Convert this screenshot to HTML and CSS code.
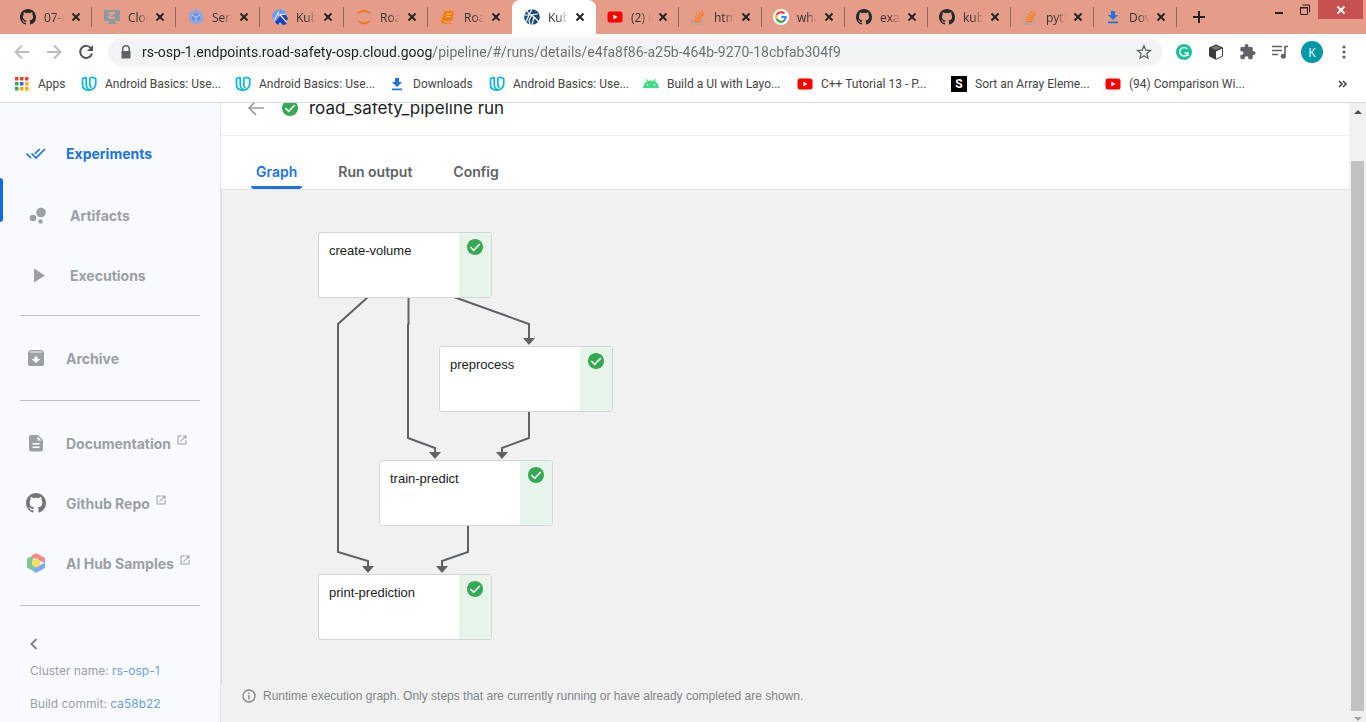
FILE: index.html
```html
<!DOCTYPE html>
<html lang="en">
<head>
<meta charset="utf-8">
<title>Kubeflow Pipelines</title>
<link rel="stylesheet" href="styles.css">
</head>
<body>
<svg class="defs" aria-hidden="true">
  <symbol id="github" viewBox="0 0 16 16"><path fill="currentColor" d="M8 0C3.58 0 0 3.58 0 8c0 3.54 2.29 6.53 5.47 7.59.4.07.55-.17.55-.38 0-.19-.01-.82-.01-1.49-2.01.37-2.53-.49-2.69-.94-.09-.23-.48-.94-.82-1.13-.28-.15-.68-.52-.01-.53.63-.01 1.08.58 1.23.82.72 1.21 1.87.87 2.33.66.07-.52.28-.87.51-1.07-1.78-.2-3.64-.89-3.64-3.95 0-.87.31-1.59.82-2.15-.08-.2-.36-1.02.08-2.12 0 0 .67-.21 2.2.82a7.6 7.6 0 0 1 4 0c1.53-1.04 2.2-.82 2.2-.82.44 1.1.16 1.92.08 2.12.51.56.82 1.27.82 2.15 0 3.07-1.87 3.75-3.65 3.95.29.25.54.73.54 1.48 0 1.07-.01 1.93-.01 2.2 0 .21.15.46.55.38A8 8 0 0 0 16 8c0-4.42-3.58-8-8-8z"/></symbol>
  <symbol id="x" viewBox="0 0 16 16"><path d="M4.500 4.500l7 7m0-7l-7 7" stroke="#222" stroke-width="1.900" fill="none"/></symbol>
  <symbol id="youtube" viewBox="0 0 16 16"><rect x="0.500" y="2.500" width="15" height="11" rx="2.500" fill="#f00"/><path d="M6.300 5.500v5l4.200-2.500z" fill="#fff"/></symbol>
  <symbol id="stack" viewBox="0 0 16 16"><path d="M2 10v5h10v-5" stroke="#a9a9a9" stroke-width="1.300" fill="none"/><path d="M3.700 12.700h6.600M3.900 10.300l6.500 1.100M4.700 7.600l6 2.400M6.300 4.800l5 4.100M8.600 2.400l3.900 5.200M11.600 1l1.500 6" stroke="#f48024" stroke-width="1.250" fill="none"/></symbol>
  <symbol id="download" viewBox="0 0 16 16"><path d="M6 2h4v4h3l-5 5-5-5h3zM3 12.500h10v1.700H3z" fill="#1a73e8"/></symbol>
  <symbol id="udacity" viewBox="0 0 16 16"><path d="M5.500 1.200L1.500 2.500V8c0 3.500 1.500 5.500 4.300 6 5.200.8 8.900-1.800 8.900-6V2.500l-3.500-1.300M5.200 1.500V8c0 2.800 1 4.800 3.300 5.800M11.200 1.200L8.800 2.300V9c0 1.300.6 2.400 1.800 2.900" fill="none" stroke="#02b3e4" stroke-width="1.700" stroke-linejoin="round"/></symbol>
  <symbol id="check" viewBox="0 0 24 24"><path fill="#34a853" d="M12 0C5.400 0 0 5.400 0 12s5.400 12 12 12 12-5.400 12-12S18.600 0 12 0z"/><path d="M5 12l5 5 9.300-9.500" fill="none" stroke="#fff" stroke-width="2.400"/></symbol>
  <symbol id="open" viewBox="0 0 24 24"><path fill="currentColor" d="M19 19H5V5h7V3H3v18h18v-9h-2v7zM14 3v2h3.600l-9.800 9.800 1.400 1.400L19 6.400V10h2V3z"/></symbol>
</svg>

<header class="browser">
  <div class="strip">
    <div class="tab"><svg class="fav ink"><use href="#github"/></svg><span class="tab-title">07-r</span><button class="close" aria-label="Close tab"><svg><use href="#x"/></svg></button></div>
    <div class="tab"><svg class="fav" viewBox="0 0 16 16"><path d="M0 1h16v11h-5v2h2v1H3v-1h2v-2H0z" fill="#93989b"/><path d="M4 4h5l2-1M4 8.500l6-4.500M5 9h6" stroke="#e3aa98" stroke-width="1.500" fill="none"/></svg><span class="tab-title">Clou</span><button class="close" aria-label="Close tab"><svg><use href="#x"/></svg></button></div>
    <div class="tab"><svg class="fav" viewBox="0 0 16 16"><path d="M8 0l7 4v8l-7 4-7-4V4z" fill="#a9a2c2"/><path d="M8 1.500l5.500 3v7L8 14.500l-5.500-3v-7z" fill="none" stroke="#7baaf7" stroke-width="1.200"/><path d="M8 4l4 2.200v4.200L8 12.500l-4-2.100V6.200z" fill="#5b8ff0"/><path d="M4 6.200l4 2 4-2M8 8.200v4" stroke="#c4cff0" stroke-width="1" fill="none"/></svg><span class="tab-title">Serv</span><button class="close" aria-label="Close tab"><svg><use href="#x"/></svg></button></div>
    <div class="tab"><svg class="fav" viewBox="0 0 16 16"><path d="M0 6l3-4 5-2 5 2 2 4-5-1-4 3-3 5-2-3z" fill="#699df5"/><path d="M3 13l5-6 7 8-4 1-3-3-2 3zM9 5l5 1 2 4-2 2z" fill="#0d47c9"/><path d="M7 2L2 12M5 6l9-1M8 6l7 7" stroke="#e8eefc" stroke-width="1" fill="none"/></svg><span class="tab-title">Kub</span><button class="close" aria-label="Close tab"><svg><use href="#x"/></svg></button></div>
    <div class="tab"><svg class="fav" viewBox="0 0 16 16"><path d="M1 5.500C3-1 13-1 15 5.500 12 2 4 2 1 5.500zM1 10.500c2 6.500 12 6.500 14 0-3 3.500-11 3.500-14 0z" fill="#f37726"/></svg><span class="tab-title">Roa</span><button class="close" aria-label="Close tab"><svg><use href="#x"/></svg></button></div>
    <div class="tab tab-before"><svg class="fav" viewBox="0 0 16 16"><path d="M4.500 2H14l-2 10H4.500c-1.500 0-1.500 1.500 0 1.500H12l-.500 1H3.500c-2 0-2.500-1-2-3z" fill="#f57c00"/><path d="M6.500 5h5M6 7.500h5" stroke="#ffd0a0" stroke-width="1"/></svg><span class="tab-title">Roa</span><button class="close" aria-label="Close tab"><svg><use href="#x"/></svg></button></div>
    <div class="tab tab-active"><svg class="fav" viewBox="0 0 16 16"><circle cx="8" cy="8" r="7.800" fill="#174a78"/><path d="M0 6l5 0L8 0M5 6l-3 7M5 6l9-1M8 6l-3 5 1 5M8 6l7 7M3 2l3 4M10 8l-2 8" stroke="#fff" stroke-width="1.200" fill="none"/></svg><span class="tab-title">Kub</span><button class="close" aria-label="Close tab"><svg><use href="#x"/></svg></button></div>
    <div class="tab tab-slim"><svg class="fav"><use href="#youtube"/></svg><span class="tab-title">(2) I</span><button class="close" aria-label="Close tab"><svg><use href="#x"/></svg></button></div>
    <div class="tab tab-slim"><svg class="fav"><use href="#stack"/></svg><span class="tab-title">htm</span><button class="close" aria-label="Close tab"><svg><use href="#x"/></svg></button></div>
    <div class="tab tab-slim"><svg class="fav" viewBox="0 0 16 16"><circle cx="8" cy="8" r="8" fill="#fff"/><g fill="none" stroke-width="2.200"><path d="M11.500 4.600A4.800 4.800 0 0 0 3.700 6" stroke="#ea4335"/><path d="M3.700 5.900a4.800 4.800 0 0 0 0 4.200" stroke="#fbbc05"/><path d="M3.700 10a4.800 4.800 0 0 0 7.600 1.500" stroke="#34a853"/><path d="M8.200 8h4.500c0 1.500-.500 2.700-1.500 3.600" stroke="#4285f4"/></g></svg><span class="tab-title">wha</span><button class="close" aria-label="Close tab"><svg><use href="#x"/></svg></button></div>
    <div class="tab tab-slim"><svg class="fav ink"><use href="#github"/></svg><span class="tab-title">exa</span><button class="close" aria-label="Close tab"><svg><use href="#x"/></svg></button></div>
    <div class="tab tab-slim"><svg class="fav ink"><use href="#github"/></svg><span class="tab-title">kub</span><button class="close" aria-label="Close tab"><svg><use href="#x"/></svg></button></div>
    <div class="tab tab-slim"><svg class="fav"><use href="#stack"/></svg><span class="tab-title">pytl</span><button class="close" aria-label="Close tab"><svg><use href="#x"/></svg></button></div>
    <div class="tab tab-slim"><svg class="fav"><use href="#download"/></svg><span class="tab-title">Dov</span><button class="close" aria-label="Close tab"><svg><use href="#x"/></svg></button></div>
    <button class="new-tab" aria-label="New tab"><svg viewBox="0 0 12 12"><path d="M6 0v12M0 6h12" stroke="#222" stroke-width="2"/></svg></button>
    <div class="window-controls">
      <button class="win" aria-label="Minimize"><svg viewBox="0 0 12 12"><path d="M2 9h8" stroke="#222" stroke-width="2"/></svg></button>
      <button class="win" aria-label="Restore"><svg viewBox="0 0 12 12"><path d="M1.500 4h7v6.500h-7zM1 3.500h8M3.500 1h7v7.500" stroke="#222" fill="none"/></svg></button>
      <button class="win win-close" aria-label="Close"><svg viewBox="0 0 12 12"><path d="M2.500 2.500l7 7m0-7l-7 7" stroke="#fff" stroke-width="1.800"/></svg></button>
    </div>
  </div>

  <div class="toolbar">
    <button class="tool" aria-label="Back"><svg viewBox="0 0 16 16"><path d="M15 8H2M8 1.500L1.500 8 8 14.500" stroke="#babcbe" stroke-width="1.800" fill="none"/></svg></button>
    <button class="tool" aria-label="Forward"><svg viewBox="0 0 16 16"><path d="M1 8h13M8 1.500L14.500 8 8 14.500" stroke="#babcbe" stroke-width="1.800" fill="none"/></svg></button>
    <button class="tool" aria-label="Reload"><svg viewBox="0 0 16 16"><path d="M13.200 4.500A6 6 0 1 0 14 9.500" stroke="#555" stroke-width="2" fill="none"/><path d="M15 1v6H9z" fill="#555"/></svg></button>
    <div class="omnibox">
      <svg class="lock" viewBox="0 0 12 14"><path d="M2 6V4a4 4 0 0 1 8 0v2h.500v7.500h-9V6zm1.500 0h5V4a2.500 2.500 0 0 0-5 0z" fill="#5f6368"/></svg>
      <input class="url" type="text" aria-label="Address" value="rs-osp-1.endpoints.road-safety-osp.cloud.goog/pipeline/#/runs/details/e4fa8f86-a25b-464b-9270-18cbfab304f9">
      <button class="star" aria-label="Bookmark this page"><svg viewBox="0 0 16 16"><path d="M8 1.800l1.800 4.300 4.700.4-3.600 3.100 1.100 4.600L8 11.700l-4 2.500 1.100-4.600-3.600-3.100 4.700-.4z" fill="none" stroke="#5f6368" stroke-width="1.300"/></svg></button>
    </div>
    <div class="extensions">
      <button class="tool" aria-label="Grammarly"><svg viewBox="0 0 16 16"><circle cx="8" cy="8" r="8" fill="#15c39a"/><path d="M11.300 5A4.300 4.300 0 1 0 12 9.500M8.500 9H12v3" stroke="#fff" stroke-width="1.500" fill="none"/></svg></button>
      <button class="tool" aria-label="Cube"><svg viewBox="0 0 16 16"><path d="M8 .5l7 3v8.700l-7 3.500-7-3.500V3.500z" fill="#3c3c3c"/><path d="M8 7.500l6-3v7.200l-6 3z" fill="#fff"/><path d="M3 3.800L8 1.700l5 2.100-5 2.300z" fill="#777"/></svg></button>
      <button class="tool" aria-label="Extensions"><svg viewBox="2 1 21 22"><path fill="#5f6368" d="M20.500 11H19V7a2 2 0 0 0-2-2h-4V3.500a2.500 2.500 0 0 0-5 0V5H4a2 2 0 0 0-2 2v3.800h1.500a2.700 2.700 0 0 1 0 5.400H2V20c0 1.100.9 2 2 2h3.800v-1.500a2.700 2.700 0 0 1 5.400 0V22H17a2 2 0 0 0 2-2v-4h1.500a2.500 2.500 0 0 0 0-5z"/></svg></button>
      <button class="tool" aria-label="Media"><svg viewBox="0 0 16 16"><path d="M0 2.500h10M0 6.500h10M0 10.500h6M16 2.500h-3v9.500" stroke="#5f6368" stroke-width="1.600" fill="none"/><circle cx="11.300" cy="12.300" r="2.500" fill="#5f6368"/></svg></button>
      <button class="avatar" aria-label="Profile">K</button>
      <button class="tool" aria-label="Menu"><svg viewBox="0 0 16 16"><g fill="#5f6368"><circle cx="8" cy="3" r="1.600"/><circle cx="8" cy="8" r="1.600"/><circle cx="8" cy="13" r="1.600"/></g></svg></button>
    </div>
  </div>

  <nav class="bookmarks" aria-label="Bookmarks">
    <a class="mark mark-apps" href="#apps"><svg class="fav" viewBox="0 0 16 16"><path d="M1 1h3.500v3.500H1zM6 1h3.500v3.500H6zM11 1h3.500v3.500H11z" fill="#ea4335"/><path d="M1 6h3.500v3.500H1zM1 11h3.500v3.500H1z" fill="#34a853"/><path d="M6 6h3.500v3.500H6z" fill="#1a73e8"/><path d="M11 6h3.500v3.500H11zM6 11h3.500v3.500H6zM11 11h3.500v3.500H11z" fill="#fbab05"/></svg>Apps</a>
    <a class="mark" href="#b1"><svg class="fav"><use href="#udacity"/></svg>Android Basics: Use...</a>
    <a class="mark" href="#b2"><svg class="fav"><use href="#udacity"/></svg>Android Basics: Use...</a>
    <a class="mark mark-short" href="#b3"><svg class="fav"><use href="#download"/></svg>Downloads</a>
    <a class="mark" href="#b4"><svg class="fav"><use href="#udacity"/></svg>Android Basics: Use...</a>
    <a class="mark" href="#b5"><svg class="fav" viewBox="0 0 16 16"><path d="M0 12c.300-3.500 2-5.500 4-6.500L2.800 3.400l.8-.4L5 5a9 9 0 0 1 6 0l1.400-2 .8.400L12 5.500c2 1 3.700 3 4 6.500z" fill="#3ddc84"/><circle cx="4.500" cy="9" r=".8" fill="#fff"/><circle cx="11.500" cy="9" r=".8" fill="#fff"/></svg>Build a UI with Layo...</a>
    <a class="mark" href="#b6"><svg class="fav"><use href="#youtube"/></svg>C++ Tutorial 13 - P...</a>
    <a class="mark" href="#b7"><span class="fav letter">S</span>Sort an Array Eleme...</a>
    <a class="mark" href="#b8"><svg class="fav"><use href="#youtube"/></svg>(94) Comparison Wi...</a>
    <button class="more" aria-label="More bookmarks"><svg viewBox="0 0 10 8"><path d="M1 1l3 3-3 3M5 1l3 3-3 3" stroke="#444" stroke-width="1.600" fill="none"/></svg></button>
  </nav>
</header>

<div class="page">
  <aside class="sidebar">
    <span class="indicator"></span>
    <nav>
      <a class="item item-active" href="#experiments"><svg viewBox="0 0 20 20"><path d="M0.500 10.500l4.500 4.500M5.500 10.500l4.500 4.500 9-9M8.700 11l5-5" stroke="#1a73e8" stroke-width="1.700" fill="none"/></svg>Experiments</a>
      <a class="item item-sub" href="#artifacts"><svg viewBox="0 0 20 20"><g fill="#9aa0a6"><circle cx="5" cy="12" r="3.300"/><circle cx="13" cy="6.500" r="4.800"/><circle cx="12.500" cy="15.500" r="2.200"/></g></svg>Artifacts</a>
      <a class="item item-sub" href="#executions"><svg viewBox="0 0 20 20"><path d="M6 2.500v14l11-7z" fill="#9aa0a6"/></svg>Executions</a>
      <hr>
      <a class="item" href="#archive"><svg viewBox="0 0 20 20"><path d="M4 2h12l2 2.500V16a2 2 0 0 1-2 2H4a2 2 0 0 1-2-2V4.500z" fill="#9aa0a6"/><path d="M8.500 8.500h3v2.500h3L10 15l-4.500-4h3z" fill="#fff"/><path d="M4 4h12" stroke="#f8fafd"/></svg>Archive</a>
      <hr>
      <a class="item" href="#docs"><svg viewBox="0 0 20 20"><path d="M5 2h7l5 5v9.500a2 2 0 0 1-2 2H5a2 2 0 0 1-2-2V4a2 2 0 0 1 2-2z" fill="#9aa0a6"/><path d="M11.500 3.500v4h4zM6.500 10h7v1.500h-7zM6.500 13.500h7V15h-7z" fill="#fff"/></svg>Documentation<svg class="ext"><use href="#open"/></svg></a>
      <a class="item" href="#github-repo"><svg class="octo"><use href="#github"/></svg>Github Repo<svg class="ext"><use href="#open"/></svg></a>
      <a class="item" href="#samples"><svg viewBox="0 0 20 20"><path d="M10 0l9 5v5l-5-2-4-3-4 1V2.500z" fill="#f08d87"/><path d="M6 3L1 5.500v9L7 18l3-3-3-4V6z" fill="#7fc796"/><path d="M19 9.500V15l-9 5-3-2v-2.500l8-4z" fill="#7baaf7"/><path d="M10 5.500l4 2.300v4.500l-4 2.200-4-2.200V7.800z" fill="#fbdc5c"/></svg>AI Hub Samples<svg class="ext"><use href="#open"/></svg></a>
      <hr>
    </nav>
    <div class="build">
      <button class="collapse" aria-label="Collapse"><svg viewBox="0 0 10 14"><path d="M7.500 2L2.500 7l5 5" stroke="#80868b" stroke-width="2" fill="none"/></svg></button>
      <p>Cluster name: <a href="#cluster">rs-osp-1</a></p>
      <p>Build commit: <a href="#commit">ca58b22</a></p>
    </div>
  </aside>

  <main class="main">
    <div class="heading">
      <button class="back" aria-label="Back to runs"><svg viewBox="0 0 16 16"><path d="M16 8H1.500M8 1L1 8l7 7" stroke="#9e9e9e" stroke-width="1.700" fill="none"/></svg></button>
      <svg class="status"><use href="#check"/></svg>
      <h1>road_safety_pipeline run</h1>
    </div>
    <div class="views" role="tablist">
      <button class="view view-active" role="tab" aria-selected="true">Graph</button>
      <button class="view" role="tab">Run output</button>
      <button class="view" role="tab">Config</button>
    </div>
    <section class="graph">
      <div class="canvas">
        <svg class="edges" viewBox="0 0 400 460">
          <g fill="none" stroke="#5f6368" stroke-width="2">
            <path d="M147 107L117 134V362L147 371V377"/>
            <path d="M187.500 107V134L187 135V248L214 258V263"/>
            <path d="M233 107L308 134V148"/>
            <path d="M308 221V248L281 258V263"/>
            <path d="M247 335V362L221 371V377"/>
          </g>
          <path fill="#5f6368" d="M141 376h12l-6 7zM208 262h12l-6 7zM302 148h12l-6 7zM275 262h12l-6 7zM215 376h12l-6 7z"/>
        </svg>
        <div class="node create">create-volume<span><svg><use href="#check"/></svg></span></div>
        <div class="node preprocess">preprocess<span><svg><use href="#check"/></svg></span></div>
        <div class="node train">train-predict<span><svg><use href="#check"/></svg></span></div>
        <div class="node print">print-prediction<span><svg><use href="#check"/></svg></span></div>
      </div>
      <p class="note"><svg viewBox="0 0 14 14"><circle cx="7" cy="7" r="6" fill="none" stroke="#80868b" stroke-width="1.300"/><path d="M7 6v4.500M7 3.500v1.400" stroke="#80868b" stroke-width="1.400"/></svg>Runtime execution graph. Only steps that are currently running or have already completed are shown.</p>
    </section>
  </main>

  <div class="scrollbar"><svg class="arrow" viewBox="0 0 8 4"><path d="M0 4l4-4 4 4z" fill="#505050"/></svg><div class="thumb"></div><svg class="arrow" viewBox="0 0 8 4"><path d="M0 0l4 4 4-4z" fill="#a3a3a3"/></svg></div>
</div>
</body>
</html>
```
FILE: styles.css
```css
* { box-sizing: border-box; }
body {
  margin: 0;
  height: 100vh;
  display: flex;
  flex-direction: column;
  overflow: hidden;
  background: #fff;
  font-family: "Liberation Sans", Arial, sans-serif;
}
button { border: 0; padding: 0; background: none; font: inherit; color: inherit; }
a { text-decoration: none; color: inherit; }
p { margin: 0; }
svg { display: block; flex: none; }
.defs { position: absolute; width: 0; height: 0; }

/* Browser frame */
.browser {
  flex: none;
  border-bottom: 1px solid #d9dbde;
  font-family: "Open Sans", "Noto Sans", sans-serif;
}
.strip { display: flex; height: 34px; padding-left: 8px; background: #e59c88; }
.fav { width: 16px; height: 16px; flex: none; }
.ink { color: #24292e; }
.tab {
  flex: none;
  display: flex;
  align-items: center;
  width: 84px;
  padding-left: 12px;
  font-size: 12px;
  color: #333;
  background: linear-gradient(#8f6a60, #8f6a60) right center / 1px 20px no-repeat;
}
.tab-slim { width: 83px; padding-left: 11px; }
.tab-before { background: none; }
.tab-active { background: #fff; border-radius: 8px 8px 0 0; }
.tab-active + .tab { background-image: linear-gradient(#8f6a60, #8f6a60); }
.tab-title {
  width: 20px;
  margin: 0 4px 0 8px;
  white-space: nowrap;
  -webkit-mask-image: linear-gradient(90deg, #000 50%, transparent);
  mask-image: linear-gradient(90deg, #000 50%, transparent);
}
.close svg { width: 16px; height: 16px; }
.new-tab { width: 44px; display: grid; place-items: center; }
.new-tab svg { width: 12px; height: 12px; }
.window-controls { display: flex; margin-left: auto; padding-right: 3px; }
.win { width: 26px; height: 19px; display: grid; place-items: center; }
.win svg { width: 12px; height: 12px; }
.win-close { width: 45px; background: #c75050; }

.toolbar { display: flex; align-items: center; height: 36px; padding-left: 6px; }
.tool { width: 32px; height: 32px; display: grid; place-items: center; }
.tool svg { width: 16px; height: 16px; }
.omnibox {
  flex: 1;
  display: flex;
  align-items: center;
  height: 28px;
  margin-left: 6px;
  padding: 0 10px 0 12px;
  border-radius: 14px;
  background: #f1f3f4;
}
.lock { width: 12px; height: 14px; }
.url {
  flex: 1;
  height: 24px;
  margin-left: 10px;
  padding: 0;
  border: 0;
  outline: 0;
  font: 14px/24px Roboto, "Open Sans", sans-serif;
  color: transparent;
  background: linear-gradient(90deg, #202124 291px, #6b6f73 291px);
  -webkit-background-clip: text;
  background-clip: text;
}
.star svg { width: 16px; height: 16px; }
.extensions { display: flex; align-items: center; padding: 0 6px; }
.avatar {
  width: 22px;
  height: 22px;
  margin: 0 5px;
  border-radius: 50%;
  background: #0097a7;
  color: #fff;
  font-size: 12px;
}

.bookmarks { display: flex; align-items: center; height: 32px; padding: 0 18px 4px 14px; font-family: Roboto, "Open Sans", sans-serif; }
.mark {
  flex: none;
  display: flex;
  align-items: center;
  gap: 8px;
  width: 154px;
  white-space: nowrap;
  font-size: 12px;
  color: #444;
}
.mark-apps { width: 67px; }
.mark-short { width: 100px; }
.letter { display: grid; place-items: center; background: #000; color: #fff; font-size: 12px; font-weight: 700; }
.more { margin-left: auto; }
.more svg { width: 10px; height: 8px; }

/* Page */
.page { flex: 1; min-height: 0; display: flex; }
.sidebar {
  position: relative;
  flex: none;
  width: 221px;
  padding-top: 20px;
  background: #f8fafd;
  border-right: 1px solid #e4e6ea;
  font-family: Inter, "Open Sans", sans-serif;
}
.indicator {
  position: absolute;
  left: 0;
  top: 75px;
  width: 3px;
  height: 44px;
  border-radius: 0 3px 3px 0;
  background: #0d6de7;
}
.item {
  display: flex;
  align-items: center;
  gap: 20px;
  height: 60px;
  padding-left: 26px;
  font-size: 14px;
  font-weight: 700;
  color: #9aa0a6;
}
.item svg { width: 20px; height: 20px; }
.item-active { color: #1a73e8; }
.item-sub { padding-left: 28px; padding-top: 5px; gap: 22px; }
.item .octo { color: #757575; }
.item .ext { width: 12px; height: 12px; margin: 0 0 6px -15px; }
.sidebar hr { height: 1px; margin: 12px 20px; border: 0; background: #bdc1c6; }
.build { padding-left: 30px; font-size: 12px; color: #9aa0a6; }
.build a { color: #6d9fdb; }
.build p { line-height: 33px; }
.collapse { display: block; height: 14px; margin: 31px 0 3px -1px; }
.collapse svg { width: 10px; height: 14px; }

.main { flex: 1; min-width: 0; display: flex; flex-direction: column; }
.heading {
  flex: none;
  display: flex;
  align-items: center;
  height: 55px;
  margin-top: -22px;
  padding-left: 27px;
  border-bottom: 1px solid #eceef0;
  clip-path: inset(22px 0 0 0);
}
.back svg, .status { width: 16px; height: 16px; }
.status { margin: 0 11px 0 18px; }
.heading h1 { margin: 0; font: 400 17px/24px Inter, "Open Sans", sans-serif; color: #202124; }
.views {
  flex: none;
  display: flex;
  align-items: flex-end;
  gap: 31px;
  height: 54px;
  padding-left: 30px;
  border-bottom: 1px solid #e2e3e5;
}
.view {
  height: 36px;
  padding: 4px 5px 3px;
  font: 600 14px/24px Inter, "Open Sans", sans-serif;
  color: #5f6368;
}
.view-active { color: #1a73e8; background: radial-gradient(#1a73e8, #1a73e8) bottom / 100% 3px no-repeat; border-radius: 3px; }
.graph { flex: 1; display: flex; flex-direction: column; background: #f1f1f1; }
.canvas { position: relative; flex: 1; border-left: 1px solid #dadce0; }
.edges { position: absolute; left: -1px; top: 0; width: 400px; height: 460px; }
.node {
  position: absolute;
  width: 174px;
  height: 66px;
  padding: 8px 10px;
  border: 1px solid #d3d5d8;
  border-radius: 3px;
  background: #fff;
  font-size: 13px;
  line-height: 20px;
  color: #202124;
}
.node span {
  position: absolute;
  top: 0;
  right: 0;
  bottom: 0;
  width: 32px;
  padding: 6px 8px;
  background: #e6f4ea;
}
.node svg { width: 16px; height: 16px; }
.create { left: 96px; top: 42px; }
.preprocess { left: 217px; top: 156px; }
.train { left: 157px; top: 270px; }
.print { left: 96px; top: 384px; }
.note {
  display: flex;
  align-items: center;
  gap: 7px;
  height: 38px;
  padding: 0 21px 14px;
  font-size: 12px;
  color: #80868b;
}
.note svg { width: 14px; height: 14px; }

.scrollbar {
  flex: none;
  width: 17px;
  display: flex;
  flex-direction: column;
  align-items: center;
  padding: 7px 0 1px;
  background: #f1f1f1;
}
.arrow { width: 8px; height: 4px; }
.thumb { flex: 1; width: 13px; margin: 47px 0 6px; background: #c1c1c1; }
```
